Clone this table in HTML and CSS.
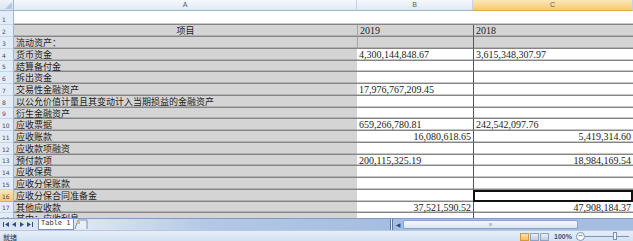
FILE: index.html
```html
<!DOCTYPE html>
<html>
<head>
<meta charset="utf-8">
<link rel="stylesheet" href="styles.css">
</head>
<body>
<div class="app">
  <div class="grid">
    <div class="row hdr">
      <div class="corner"><span class="tri"></span></div>
      <div class="ch ca">A</div>
      <div class="ch cb">B</div>
      <div class="ch cc sel">C</div>
    </div>
    <div class="row r1">
      <div class="rn">1</div>
      <div class="c ca w"></div>
      <div class="c cb w"></div>
      <div class="c cc w"></div>
    </div>
    <div class="row r12">
      <div class="rn">2</div>
      <div class="c ca g center">项目</div>
      <div class="c cb g num">2019</div>
      <div class="c cc g num bc">2018</div>
    </div>
    <div class="row r12">
      <div class="rn">3</div>
      <div class="c ca g">流动资产：</div>
      <div class="c cb g"></div>
      <div class="c cc g bc"></div>
    </div>
    <div class="row r12">
      <div class="rn">4</div>
      <div class="c ca g">货币资金</div>
      <div class="c cb w num">4,300,144,848.67</div>
      <div class="c cc w num bc">3,615,348,307.97</div>
    </div>
    <div class="row r11">
      <div class="rn">5</div>
      <div class="c ca g">结算备付金</div>
      <div class="c cb w"></div>
      <div class="c cc w bc"></div>
    </div>
    <div class="row r12">
      <div class="rn">6</div>
      <div class="c ca g">拆出资金</div>
      <div class="c cb w"></div>
      <div class="c cc w bc"></div>
    </div>
    <div class="row r12">
      <div class="rn">7</div>
      <div class="c ca g">交易性金融资产</div>
      <div class="c cb w num">17,976,767,209.45</div>
      <div class="c cc w bc"></div>
    </div>
    <div class="row r12">
      <div class="rn">8</div>
      <div class="c ca g">以公允价值计量且其变动计入当期损益的金融资产</div>
      <div class="c cb w"></div>
      <div class="c cc w bc"></div>
    </div>
    <div class="row r11">
      <div class="rn">9</div>
      <div class="c ca g">衍生金融资产</div>
      <div class="c cb w"></div>
      <div class="c cc w bc"></div>
    </div>
    <div class="row r12">
      <div class="rn">10</div>
      <div class="c ca g">应收票据</div>
      <div class="c cb w num">659,266,780.81</div>
      <div class="c cc w num bc">242,542,097.76</div>
    </div>
    <div class="row r12">
      <div class="rn">11</div>
      <div class="c ca g">应收账款</div>
      <div class="c cb w num right">16,080,618.65</div>
      <div class="c cc w num right bc">5,419,314.60</div>
    </div>
    <div class="row r12">
      <div class="rn">12</div>
      <div class="c ca g">应收款项融资</div>
      <div class="c cb w"></div>
      <div class="c cc w bc"></div>
    </div>
    <div class="row r11">
      <div class="rn">13</div>
      <div class="c ca g">预付款项</div>
      <div class="c cb w num">200,115,325.19</div>
      <div class="c cc w num right bc">18,984,169.54</div>
    </div>
    <div class="row r12">
      <div class="rn">14</div>
      <div class="c ca g">应收保费</div>
      <div class="c cb w"></div>
      <div class="c cc w bc"></div>
    </div>
    <div class="row r12">
      <div class="rn">15</div>
      <div class="c ca g">应收分保账款</div>
      <div class="c cb w"></div>
      <div class="c cc w bc"></div>
    </div>
    <div class="row r12">
      <div class="rn sel">16</div>
      <div class="c ca g">应收分保合同准备金</div>
      <div class="c cb w"></div>
      <div class="c cc w bc active"></div>
    </div>
    <div class="row r11">
      <div class="rn">17</div>
      <div class="c ca g">其他应收款</div>
      <div class="c cb w num right">37,521,590.52</div>
      <div class="c cc w num right bc">47,908,184.37</div>
    </div>
    <div class="row r5">
      <div class="rn">18</div>
      <div class="c ca g top">其中：应收利息</div>
      <div class="c cb w"></div>
      <div class="c cc w bc"></div>
    </div>
  </div>

  <div class="tabbar">
    <div class="nav">
      <svg width="38" height="11" viewBox="0 0 38 11">
        <rect x="3" y="3" width="1" height="5" fill="#2c4f80"/>
        <path d="M9 3 L5 5.5 L9 8 Z" fill="#2c4f80"/>
        <path d="M16 3 L12 5.5 L16 8 Z" fill="#2c4f80"/>
        <path d="M20 3 L24 5.5 L20 8 Z" fill="#2c4f80"/>
        <path d="M27 3 L31 5.5 L27 8 Z" fill="#2c4f80"/>
        <rect x="32" y="3" width="1" height="5" fill="#2c4f80"/>
      </svg>
    </div>
    <div class="tab">Table 1</div>
    <div class="newtab">
      <svg width="14" height="11" viewBox="0 0 14 11">
        <path d="M1 10 L4 1 L13 1 L13 10" fill="#e9eff8" stroke="#7b93b5" stroke-width="1"/>
        <rect x="3" y="2" width="3" height="3" fill="#f4b73f"/>
      </svg>
    </div>
    <div class="gap"></div>
    <div class="split"></div>
    <div class="hscroll">
      <div class="arrow">◀</div>
      <div class="thumb"><span class="grip"></span></div>
      <div class="track"></div>
    </div>
  </div>

  <div class="status">
    <div class="ready">就绪</div>
    <div class="views">
      <span class="vb on"></span>
      <span class="vb"></span>
      <span class="vb"></span>
    </div>
    <div class="zoom">100%</div>
    <div class="minus">−</div>
    <div class="slider"><span class="knob"></span></div>
  </div>
</div>
</body>
</html>
```
FILE: styles.css
```css
* { box-sizing: border-box; }
html, body { margin: 0; padding: 0; background: #fff; }
.app {
  width: 633px;
  height: 241px;
  overflow: hidden;
  display: flex;
  flex-direction: column;
  font-family: "Noto Sans CJK SC", "Liberation Serif", serif;
}
.grid {
  height: 218px;
  overflow: hidden;
  display: flex;
  flex-direction: column;
  flex: none;
}
.row { display: flex; flex: none; }
.hdr { height: 11px; }
.r1 { height: 14px; }
.r12 { height: 12px; }
.r11 { height: 11px; }
.r5 { height: 12px; }

.corner {
  width: 14px;
  flex: none;
  background: linear-gradient(#eef3fa, #dae4f1);
  border-right: 1px solid #9eb6ce;
  border-bottom: 1px solid #9eb6ce;
  position: relative;
}
.tri {
  position: absolute;
  right: 1px;
  bottom: 1px;
  width: 0;
  height: 0;
  border-left: 7px solid transparent;
  border-bottom: 7px solid #b7c8dc;
}
.ch {
  background: linear-gradient(#f6f9fd, #dfe8f3);
  border-right: 1px solid #c3d1e2;
  border-bottom: 1px solid #9eb6ce;
  font-family: "Liberation Sans", sans-serif;
  font-size: 7px;
  line-height: 10px;
  color: #4c5f7a;
  text-align: center;
}
.ch.sel {
  background: linear-gradient(#fce8b8, #f8c873);
  border-bottom-color: #e2a94a;
}
.ca { width: 343px; flex: none; }
.cb { width: 116px; flex: none; }
.cc { width: 160px; flex: none; }

.rn {
  width: 14px;
  flex: none;
  background: #e4ecf7;
  border-right: 1px solid #9eb6ce;
  border-bottom: 1px solid #c6d4e6;
  font-family: "DejaVu Sans", sans-serif;
  font-size: 6px;
  color: #3d4e66;
  padding-left: 2px;
  display: flex;
  align-items: flex-end;
  padding-bottom: 1px;
  line-height: 7px;
}
.rn.sel {
  background: linear-gradient(#fce8b8, #f8c873);
  border-bottom-color: #e2a94a;
}

.c {
  font-size: 9px;
  color: #222;
  padding-left: 2px;
  padding-right: 2px;
  display: flex;
  align-items: center;
  line-height: 9px;
  white-space: nowrap;
  border-bottom: 1px solid #858585;
  box-shadow: inset 0 -1px 0 #b0b0b0;
}
.g { background: #d4d4d4; }
.w { background: #fff; box-shadow: inset 0 -1px 0 #c8c8c8; }
.cb.g { border-left: 1px solid #a6a6a6; }
.bc { border-left: 1px solid #555; }
.center { justify-content: center; }
.num {
  font-family: "Liberation Serif", serif;
  font-size: 10px;
}
.right { justify-content: flex-end; }
.top { align-items: flex-start; padding-top: 1px; }
.active {
  border: 2px solid #111;
  box-shadow: none;
}

.tabbar {
  height: 12px;
  flex: none;
  display: flex;
  align-items: stretch;
  background: #dbe5f3;
  border-top: 1px solid #7e9cc4;
}
.nav { width: 38px; flex: none; display: flex; align-items: center; }
.tab {
  flex: none;
  width: 36px;
  background: #fff;
  border: 1px solid #7b93b5;
  border-top: none;
  font-family: "DejaVu Sans Mono", monospace;
  font-size: 7px;
  color: #333;
  line-height: 9px;
  padding-left: 2px;
  white-space: nowrap;
}
.newtab { width: 16px; flex: none; display: flex; align-items: center; }
.gap {
  flex: 1;
  background: linear-gradient(90deg, #dbe5f3 0%, #b3c8e5 40%, #a5bde0 100%);
}
.split { width: 3px; flex: none; background: #e8eef7; border-left: 1px solid #5b77a0; border-right: 1px solid #5b77a0; }
.hscroll { width: 240px; flex: none; display: flex; background: #a5bde0; }
.arrow {
  width: 10px;
  flex: none;
  font-size: 6px;
  line-height: 11px;
  color: #2c4f80;
  text-align: center;
  font-family: "DejaVu Sans", sans-serif;
}
.thumb {
  width: 175px;
  flex: none;
  background: linear-gradient(#f4f7fb, #dfe6f0);
  border: 1px solid #8ba3c6;
  border-radius: 2px;
  margin: 1px 0;
  display: flex;
  align-items: center;
  justify-content: center;
}
.grip { width: 3px; height: 3px; background: #b6c4d8; }
.track { flex: 1; }

.status {
  height: 12px;
  flex: none;
  display: flex;
  align-items: center;
  background: linear-gradient(#e6eef9, #d2dff0);
  border-top: 1px solid #b7c9e2;
  font-family: "Noto Sans CJK SC", sans-serif;
}
.ready { font-size: 7px; color: #1c2d47; padding-left: 3px; line-height: 10px; }
.views { margin-left: auto; display: flex; gap: 1px; margin-right: 5px; }
.vb {
  width: 9px;
  height: 8px;
  background: linear-gradient(#e9eef6, #c3d0e2);
  border: 1px solid #8ea3c1;
}
.vb.on { background: linear-gradient(#fbe3a4, #f2c15e); border-color: #d19a3b; }
.zoom {
  font-family: "Liberation Sans", sans-serif;
  font-size: 7px;
  color: #3b5278;
  font-weight: bold;
  width: 22px;
}
.minus {
  width: 9px;
  height: 9px;
  border-radius: 50%;
  border: 1px solid #7b93b5;
  background: #fff;
  font-size: 7px;
  line-height: 6px;
  text-align: center;
  color: #3b5278;
  font-family: "DejaVu Sans", sans-serif;
}
.slider {
  width: 44px;
  margin-right: 4px;
  height: 1px;
  background: #7b93b5;
  position: relative;
}
.knob {
  position: absolute;
  left: 28px;
  top: -4px;
  width: 4px;
  height: 8px;
  background: #f1f4f9;
  border: 1px solid #7b93b5;
}
```
